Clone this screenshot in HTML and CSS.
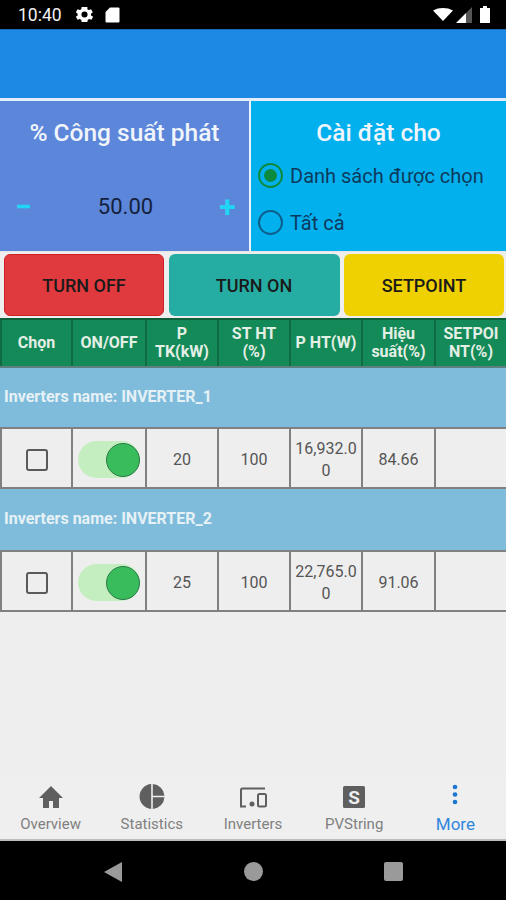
FILE: index.html
```html
<!DOCTYPE html>
<html lang="en">
<head>
    <meta charset="UTF-8">
    <meta name="viewport" content="width=device-width, initial-scale=1.0">
    <title>Inverters</title>
    <link rel="stylesheet" href="styles.css">
</head>
<body>
    <div class="status-bar">
        <div class="status-left">
            <span class="clock">10:40</span>
            <svg class="status-icon gear" width="21" height="21" viewBox="0 0 24 24"><path fill="#fff" d="M19.4 13a7.500 7.500 0 0 0 0-2l2.100-1.600-2-3.500-2.500 1a7.500 7.500 0 0 0-1.700-1L15.300 3.300h-6.600L8.300 5.900a7.500 7.500 0 0 0-1.700 1l-2.500-1-2 3.500L4.200 11a7.500 7.500 0 0 0 0 2l-2.100 1.600 2 3.500 2.500-1a7.500 7.500 0 0 0 1.700 1l.4 2.600h6.600l.4-2.600a7.500 7.500 0 0 0 1.700-1l2.500 1 2-3.500zM12 15.500a3.500 3.500 0 1 1 0-7 3.500 3.500 0 0 1 0 7z"/></svg>
            <svg class="status-icon" width="15" height="16" viewBox="0 0 15 16"><path fill="#fff" d="M5 0.500h8.500a1 1 0 0 1 1 1v13a1 1 0 0 1-1 1h-12a1 1 0 0 1-1-1V5z"/></svg>
        </div>
        <div class="status-right">
            <svg width="20" height="13" viewBox="0 0 20 13"><path fill="#fff" d="M0 2.500C6 -0.800 14 -0.800 20 2.500L10 13z"/></svg>
            <svg width="16" height="16" viewBox="0 0 16 16"><path fill="#555" d="M16 0v16h-6V6z"/><path fill="#fff" d="M10 6v10H0z"/></svg>
            <svg width="10" height="17" viewBox="0 0 10 17"><path fill="#fff" d="M3 0h4v2h3v15H0V2h3z"/></svg>
        </div>
    </div>
    <div class="app-bar"></div>

    <div class="panels">
        <div class="panel panel-power">
            <h2 class="panel-title">% Công suất phát</h2>
            <div class="stepper">
                <span class="step-btn">−</span>
                <span class="step-value">50.00</span>
                <span class="step-btn">+</span>
            </div>
        </div>
        <div class="panel panel-target">
            <h2 class="panel-title">Cài đặt cho</h2>
            <div class="radio-row"><span class="radio radio-on"></span>Danh sách được chọn</div>
            <div class="radio-row"><span class="radio"></span>Tất cả</div>
        </div>
    </div>

    <div class="actions">
        <button class="action action-off">TURN OFF</button>
        <button class="action action-on">TURN ON</button>
        <button class="action action-set">SETPOINT</button>
    </div>

    <div class="table">
        <div class="row head-row">
            <div class="cell">Chọn</div>
            <div class="cell">ON/OFF</div>
            <div class="cell">P<br>TK(kW)</div>
            <div class="cell">ST HT<br>(%)</div>
            <div class="cell">P HT(W)</div>
            <div class="cell">Hiệu<br>suất(%)</div>
            <div class="cell">SETPOI<br>NT(%)</div>
        </div>

        <div class="group-row">Inverters name: INVERTER_1</div>
        <div class="row data-row">
            <div class="cell"><span class="checkbox"></span></div>
            <div class="cell"><span class="switch"><span class="knob"></span></span></div>
            <div class="cell">20</div>
            <div class="cell">100</div>
            <div class="cell">16,932.0<br>0</div>
            <div class="cell">84.66</div>
            <div class="cell"></div>
        </div>

        <div class="group-row">Inverters name: INVERTER_2</div>
        <div class="row data-row">
            <div class="cell"><span class="checkbox"></span></div>
            <div class="cell"><span class="switch"><span class="knob"></span></span></div>
            <div class="cell">25</div>
            <div class="cell">100</div>
            <div class="cell">22,765.0<br>0</div>
            <div class="cell">91.06</div>
            <div class="cell"></div>
        </div>
    </div>

    <nav class="tabs">
        <div class="tab">
            <svg width="28" height="28" viewBox="0 0 28 28"><path fill="#5f5f5f" d="M14 3L2 15H6v10h6v-7h4v7h6V15h4z"/></svg>
            <span>Overview</span>
        </div>
        <div class="tab">
            <svg width="28" height="28" viewBox="0 0 28 28"><path fill="#5f5f5f" d="M13.200 1.030V25.970A12.500 12.500 0 0 1 13.200 1.030zM14.800 1.030A12.500 12.500 0 0 1 26.500 12.700H14.800zM14.800 14.300H26.500A12.500 12.500 0 0 1 14.800 25.970z"/></svg>
            <span>Statistics</span>
        </div>
        <div class="tab">
            <svg width="30" height="28" viewBox="0 0 30 28"><path fill="none" stroke="#5f5f5f" stroke-width="2" d="M8 23.500H3V7a1.500 1.500 0 0 1 1.500-1.500H27"/><circle cx="14" cy="21" r="2.500" fill="#5f5f5f"/><rect x="20" y="11" width="8" height="12.500" rx="1.500" fill="none" stroke="#5f5f5f" stroke-width="2"/></svg>
            <span>Inverters</span>
        </div>
        <div class="tab">
            <svg width="28" height="28" viewBox="0 0 28 28"><rect x="3" y="3" width="22" height="22" rx="1.500" fill="#5f5f5f"/><text x="14" y="20.500" class="s-glyph" text-anchor="middle">S</text></svg>
            <span>PVString</span>
        </div>
        <div class="tab tab-active">
            <svg width="28" height="28" viewBox="0 0 28 28"><circle cx="14" cy="4" r="2.300" fill="#1976d2"/><circle cx="14" cy="11.500" r="2.300" fill="#1976d2"/><circle cx="14" cy="19" r="2.300" fill="#1976d2"/></svg>
            <span>More</span>
        </div>
    </nav>

    <div class="nav-bar">
        <svg width="20" height="22" viewBox="0 0 20 22"><path fill="#9a9a9a" d="M19 1v20L1 11z"/></svg>
        <span class="nav-dot"></span>
        <span class="nav-square"></span>
    </div>
</body>
</html>
```

FILE: styles.css
```css
* {
    box-sizing: border-box;
}

body {
    margin: 0;
    width: 506px;
    height: 900px;
    display: flex;
    flex-direction: column;
    overflow: hidden;
    background-color: #eeeeee;
    font-family: Roboto, "Liberation Sans", sans-serif;
}

.status-bar {
    height: 29px;
    flex: none;
    background-color: #000;
    display: flex;
    justify-content: space-between;
    align-items: center;
    padding: 0 16px 0 18px;
    color: #f2f2f2;
}

.status-left {
    display: flex;
    align-items: center;
}

.clock {
    font-size: 17.5px;
    margin-right: 12px;
}

.status-icon {
    margin-right: 10px;
}

.status-right {
    display: flex;
    align-items: center;
    gap: 3px;
}

.status-right svg:last-child {
    margin-left: 5px;
}

.app-bar {
    height: 69px;
    flex: none;
    background-color: #1e88e5;
    border-top: 1px solid #1a6fb8;
}

.panels {
    display: grid;
    grid-template-columns: 251px 1fr;
    height: 154px;
    flex: none;
    border-top: 3px solid #e3eefa;
    border-bottom: 1px solid #e6e6e6;
}

.panel {
    min-width: 0;
}

.panel-title {
    margin: 0;
    color: #f0f5fb;
    font-size: 24.5px;
    font-weight: 500;
    text-align: center;
    line-height: 28px;
    padding-top: 18px;
}

.panel-power {
    background-color: #5c86d9;
    border-right: 2px solid #eef2f8;
}

.stepper {
    display: flex;
    justify-content: space-between;
    align-items: center;
    padding: 0 13px 0 15px;
    margin-top: 44px;
    height: 30px;
}

.step-btn {
    color: #1fd6f5;
    font-size: 30px;
    font-weight: 700;
    width: 17px;
    text-align: center;
}

.step-value {
    font-size: 22px;
    color: #14213d;
}

.radio-row {
    display: flex;
    align-items: center;
    gap: 7px;
    padding-left: 7px;
    font-size: 20px;
    color: #0d3a5c;
    height: 47px;
}

.panel-target {
    background-color: #03b0ee;
}

.panel-target .panel-title {
    margin-bottom: 5px;
}

.radio {
    width: 25px;
    height: 25px;
    border-radius: 50%;
    border: 2px solid #0b5f8a;
    flex: none;
    display: flex;
    align-items: center;
    justify-content: center;
}

.radio-on {
    border-color: #0d8a3e;
}

.radio-on::after {
    content: "";
    width: 13px;
    height: 13px;
    border-radius: 50%;
    background-color: #0d8a3e;
}

.actions {
    display: grid;
    grid-template-columns: 160px 171px 160px;
    column-gap: 4.5px;
    height: 66px;
    flex: none;
    padding: 2px 0 2px 4px;
}

.action {
    border: none;
    border-radius: 6px;
    font-family: inherit;
    font-size: 18px;
    font-weight: 500;
    color: #1a1a1a;
    padding: 0;
}

.action-off {
    background-color: #e13a3e;
    border: 1px solid #d01f24;
}

.action-on {
    background-color: #26ada3;
}

.action-set {
    background-color: #efd000;
}

.table {
    flex: 1;
    border-top: 2px solid #0f5f3a;
}

.row {
    display: grid;
    grid-template-columns: 71px 74px 72px 72px 72px 73px 72px;
}

.head-row {
    height: 48px;
    background-color: #148a58;
    color: #e4efe6;
    font-size: 16px;
    font-weight: 700;
    line-height: 18.5px;
    border-bottom: 2px solid #5d7f7f;
}

.head-row .cell {
    border-left: 2px solid #0f6b44;
}

.cell {
    display: flex;
    align-items: center;
    justify-content: center;
    text-align: center;
    min-width: 0;
    padding: 0 1px;
}

.group-row {
    height: 59px;
    background-color: #7fbcdb;
    color: #e6f1f6;
    font-size: 16px;
    font-weight: 700;
    display: flex;
    align-items: center;
    padding: 0 0 3px 4px;
}

.data-row + .group-row {
    height: 61px;
}

.data-row {
    height: 62px;
    background-color: #eeeeee;
    color: #555;
    font-size: 16px;
    line-height: 22px;
    border-top: 2px solid #808080;
    border-bottom: 2px solid #808080;
}

.data-row .cell {
    border-left: 2px solid #808080;
    padding-top: 3px;
}

.checkbox {
    width: 22px;
    height: 22px;
    border: 2px solid #5a5a5a;
    border-radius: 3px;
}

.switch {
    width: 62px;
    height: 37px;
    border-radius: 19px;
    background-color: #c5eec0;
    display: flex;
    justify-content: flex-end;
    align-items: center;
}

.knob {
    width: 34px;
    height: 34px;
    border-radius: 50%;
    background-color: #38bc5c;
    border: 1px solid #2b7a47;
}

.tabs {
    height: 65px;
    flex: none;
    display: grid;
    grid-template-columns: repeat(5, 1fr);
    border-bottom: 2px solid #bdbdbd;
    background-color: #efefef;
}

.tab {
    display: flex;
    flex-direction: column;
    align-items: center;
    color: #808080;
    font-size: 15px;
    line-height: 18px;
    padding-top: 7px;
    gap: 4px;
}

.tab-active {
    color: #2f86dd;
    font-size: 17px;
}

.s-glyph {
    font-family: Roboto, sans-serif;
    font-size: 19px;
    font-weight: 700;
    fill: #eeeeee;
}

.nav-bar {
    height: 59px;
    flex: none;
    background-color: #000;
    display: flex;
    align-items: center;
    padding: 2px 0 0 103px;
}

.nav-dot {
    width: 19px;
    height: 19px;
    border-radius: 50%;
    background-color: #9a9a9a;
    margin-left: 121px;
}

.nav-square {
    width: 19px;
    height: 19px;
    border-radius: 2px;
    background-color: #9a9a9a;
    margin-left: 121px;
}
```
